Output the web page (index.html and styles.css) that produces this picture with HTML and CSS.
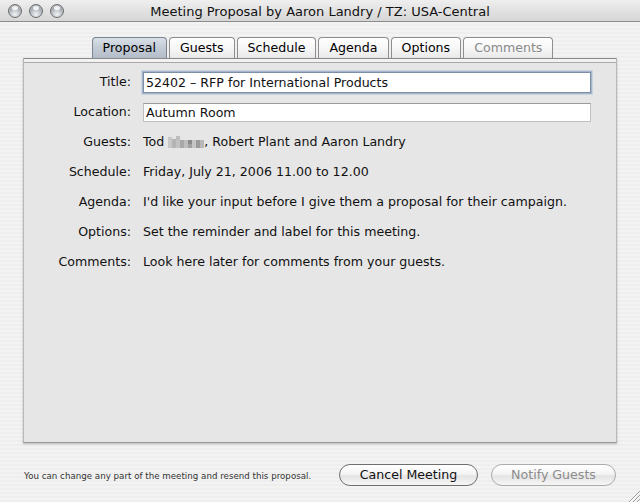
FILE: index.html
```html
<!DOCTYPE html>
<html>
<head>
<meta charset="utf-8">
<link rel="stylesheet" href="styles.css">
</head>
<body>
<div class="window">
  <div class="titlebar">
    <div class="lights">
      <span class="light"></span><span class="light"></span><span class="light"></span>
    </div>
    <div class="title">Meeting Proposal by Aaron Landry / TZ: USA-Central</div>
  </div>
  <div class="tabs">
    <div class="tab selected">Proposal</div>
    <div class="tab">Guests</div>
    <div class="tab">Schedule</div>
    <div class="tab">Agenda</div>
    <div class="tab">Options</div>
    <div class="tab disabled">Comments</div>
  </div>
  <div class="panel">
    <div class="form">
      <div class="label">Title:</div>
      <div class="value"><div class="field focused">52402 – RFP for International Products</div></div>
      <div class="label">Location:</div>
      <div class="value"><div class="field">Autumn Room</div></div>
      <div class="label">Guests:</div>
      <div class="value">Tod <svg class="blur" width="36" height="13" viewBox="0 0 36 13"><rect x="0" y="1" width="4" height="11" fill="#c8c8c8"/><rect x="4" y="3" width="4" height="9" fill="#b4b4b4"/><rect x="8" y="0" width="4" height="4" fill="#bdbdbd"/><rect x="8" y="4" width="4" height="8" fill="#c2c2c2"/><rect x="12" y="4" width="4" height="8" fill="#a8a8a8"/><rect x="16" y="4" width="4" height="8" fill="#bebebe"/><rect x="20" y="4" width="4" height="4" fill="#8a8a8a"/><rect x="20" y="8" width="4" height="4" fill="#a0a0a0"/><rect x="24" y="4" width="4" height="8" fill="#c4c4c4"/><rect x="28" y="4" width="4" height="8" fill="#9a9a9a"/><rect x="32" y="4" width="4" height="8" fill="#b8b8b8"/></svg>, Robert Plant and Aaron Landry</div>
      <div class="label">Schedule:</div>
      <div class="value">Friday, July 21, 2006 11.00 to 12.00</div>
      <div class="label">Agenda:</div>
      <div class="value">I'd like your input before I give them a proposal for their campaign.</div>
      <div class="label">Options:</div>
      <div class="value">Set the reminder and label for this meeting.</div>
      <div class="label">Comments:</div>
      <div class="value">Look here later for comments from your guests.</div>
    </div>
  </div>
  <div class="footer">
    <div class="hint">You can change any part of the meeting and resend this proposal.</div>
    <div class="buttons">
      <div class="btn">Cancel Meeting</div>
      <div class="btn disabled">Notify Guests</div>
    </div>
    <div class="grip"><svg width="13" height="13" viewBox="0 0 13 13"><path d="M13 2 L2 13 M13 6 L6 13 M13 10 L10 13" stroke="#9a9a9a" stroke-width="1"/><path d="M13 3 L3 13 M13 7 L7 13 M13 11 L11 13" stroke="#ffffff" stroke-width="1"/></svg></div>
  </div>
</div>
</body>
</html>
```

FILE: styles.css
```css
* { box-sizing: border-box; }
html, body { margin: 0; padding: 0; }
body {
  font-family: "DejaVu Sans", "Noto Sans", sans-serif;
  color: #000;
}
.window {
  width: 640px;
  height: 502px;
  display: flex;
  flex-direction: column;
  background: repeating-linear-gradient(to bottom, #eeeeee 0px, #eeeeee 2px, #f3f3f3 2px, #f3f3f3 4px);
  overflow: hidden;
}
.titlebar {
  height: 22px;
  flex: none;
  display: flex;
  align-items: center;
  position: relative;
  background: linear-gradient(to bottom, #efefef 0%, #e2e2e2 50%, #d6d6d6 100%);
  border-bottom: 1px solid #8c8c8c;
}
.lights {
  display: flex;
  gap: 7px;
  padding-left: 8px;
  position: absolute;
  left: 0;
  top: 4px;
}
.light {
  width: 14px;
  height: 14px;
  border-radius: 50%;
  border: 1px solid #6d6d6d;
  background: radial-gradient(circle at 50% 78%, #f2f4f6 0%, #c8ccd2 35%, #8c939b 80%, #6f757c 100%);
  box-shadow: inset 0 1px 0 rgba(255,255,255,0.5);
  position: relative;
}
.light::after {
  content: "";
  position: absolute;
  left: 3px;
  top: 1px;
  width: 6px;
  height: 4px;
  border-radius: 50%;
  background: rgba(255,255,255,0.85);
}
.title {
  flex: 1;
  text-align: center;
  font-size: 13px;
  color: #111;
  padding-top: 1px;
}
.tabs {
  flex: none;
  display: flex;
  justify-content: center;
  gap: 2px;
  margin-top: 15px;
  padding-left: 5px;
  height: 21px;
}
.tab {
  height: 21px;
  padding: 0 10px;
  font-size: 12.6px;
  line-height: 20px;
  border: 1px solid #8e8e8e;
  border-bottom: none;
  border-radius: 4px 4px 0 0;
  background: linear-gradient(to bottom, #ffffff 0%, #f7f7f7 50%, #e9e9e9 100%);
  color: #000;
}
.tab.selected {
  background: linear-gradient(to bottom, #d9e0e8 0%, #c4ccd6 45%, #b3bdc9 100%);
  border-color: #7c8591;
}
.tab.disabled { color: #8a8a8a; }
.panel {
  flex: none;
  margin: 0 23px;
  height: 385px;
  background: #e6e6e6;
  border-top: 1px solid #8a8a8a;
  border-left: 1px solid #b8b8b8;
  border-right: 1px solid #b8b8b8;
  border-bottom: 1px solid #9a9a9a;
  box-shadow: 0 1px 2px rgba(0,0,0,0.25);
  position: relative;
}
.panel::before {
  content: "";
  display: block;
  height: 4px;
  background: linear-gradient(to bottom, #f2f2f2 0px, #f2f2f2 3px, #a9a9a9 3px, #a9a9a9 4px);
}
.form {
  display: grid;
  grid-template-columns: 107px 1fr;
  column-gap: 12px;
  padding-right: 25px;
  padding-top: 4px;
  font-size: 12.6px;
}
.label {
  text-align: right;
  height: 30px;
  line-height: 30px;
  color: #111;
}
.value {
  height: 30px;
  line-height: 30px;
  display: flex;
  align-items: center;
  white-space: nowrap;
  color: #111;
}
.field {
  width: 100%;
  height: 19px;
  line-height: 18px;
  background: #fff;
  border: 1px solid #c0c0c0;
  border-top-color: #9a9a9a;
  padding-left: 2px;
}
.field.focused {
  height: 21px;
  line-height: 19px;
  border: 1px solid #7d8fa6;
  box-shadow: 0 0 0 1px #a6b6c9, 0 0 0 2px #c9d4e0;
}
.blur { margin: 0 0 0 4px; vertical-align: middle; }
.footer {
  flex: 1;
  display: flex;
  align-items: center;
  position: relative;
  padding: 0 24px 0 24px;
}
.hint {
  font-family: "DejaVu Sans", sans-serif;
  font-size: 8.7px;
  color: #333;
  flex: 1;
  padding-top: 6px;
}
.buttons {
  display: flex;
  gap: 13px;
  padding-top: 5px;
}
.btn {
  height: 22px;
  border-radius: 11px;
  border: 1px solid #6e6e6e;
  background: linear-gradient(to bottom, #ffffff 0%, #f4f4f4 45%, #e4e4e4 55%, #f6f6f6 100%);
  font-size: 12.6px;
  line-height: 20px;
  text-align: center;
  width: 139px;
  color: #111;
}
.btn.disabled {
  width: 125px;
  border-color: #ababab;
  color: #8c8c8c;
}
.grip {
  position: absolute;
  right: 0;
  bottom: 0;
  width: 13px;
  height: 13px;
}
.grip svg { display: block; }
```
